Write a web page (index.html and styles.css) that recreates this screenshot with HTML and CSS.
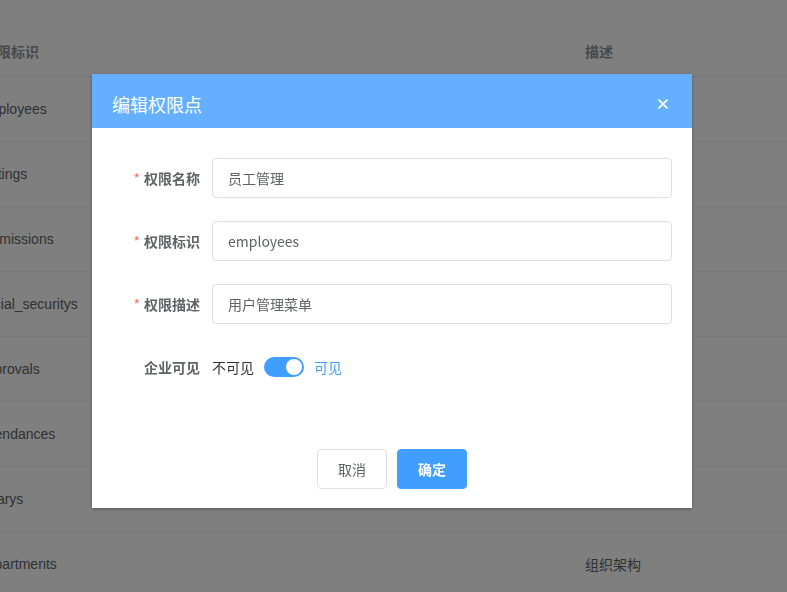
FILE: index.html
```html
<!DOCTYPE html>
<html lang="zh">
<head>
<meta charset="utf-8">
<link rel="stylesheet" href="styles.css">
</head>
<body>
<div class="table">
  <div class="row head"><div class="c1">权限标识</div><div class="c2">描述</div></div>
  <div class="row"><div class="c1">employees</div><div class="c2"></div></div>
  <div class="row"><div class="c1">settings</div><div class="c2"></div></div>
  <div class="row"><div class="c1">permissions</div><div class="c2"></div></div>
  <div class="row"><div class="c1">social_securitys</div><div class="c2"></div></div>
  <div class="row"><div class="c1">approvals</div><div class="c2"></div></div>
  <div class="row"><div class="c1">attendances</div><div class="c2"></div></div>
  <div class="row"><div class="c1">salarys</div><div class="c2"></div></div>
  <div class="row"><div class="c1">departments</div><div class="c2">组织架构</div></div>
</div>
<div class="mask"></div>
<div class="dialog">
  <div class="dlg-head">
    <span class="dlg-title">编辑权限点</span>
    <svg class="close" width="10" height="10" viewBox="0 0 10 10"><path d="M0.5 0.5L9.5 9.5M9.5 0.5L0.5 9.5" stroke="#fff" stroke-width="1.6" fill="none"/></svg>
  </div>
  <div class="dlg-body">
    <div class="item">
      <label class="lbl"><span class="req">*</span>权限名称</label>
      <div class="input">员工管理</div>
    </div>
    <div class="item">
      <label class="lbl"><span class="req">*</span>权限标识</label>
      <div class="input">employees</div>
    </div>
    <div class="item">
      <label class="lbl"><span class="req">*</span>权限描述</label>
      <div class="input">用户管理菜单</div>
    </div>
    <div class="item">
      <label class="lbl">企业可见</label>
      <div class="switch-wrap">
        <span class="off">不可见</span>
        <span class="switch"><span class="knob"></span></span>
        <span class="on">可见</span>
      </div>
    </div>
  </div>
  <div class="dlg-foot">
    <button class="btn">取消</button>
    <button class="btn primary">确定</button>
  </div>
</div>
</body>
</html>
```
FILE: styles.css
```css
html, body {
  margin: 0;
  padding: 0;
  background: #fff;
  font-family: "Liberation Sans", "Noto Sans CJK SC", sans-serif;
  font-size: 14px;
  color: #606266;
  overflow: hidden;
  height: 592px;
}
.table {
  margin-left: -21px;
  width: 824px;
}
.row {
  display: flex;
  align-items: center;
  height: 64px;
  border-bottom: 1px solid #ebeef5;
}
.row.head {
  height: 76px;
  align-items: flex-end;
  font-weight: bold;
  color: #909399;
}
.row.head > div {
  padding-bottom: 14px;
  line-height: 20px;
}
.row.head > .c1 { padding-left: 4px; width: 602px; }
.c1 { width: 606px; }
.c2 { flex: 1; }
.mask {
  position: fixed;
  inset: 0;
  background: rgba(0, 0, 0, 0.5);
}
.dialog {
  position: absolute;
  left: 92px;
  top: 74px;
  width: 600px;
  background: #fff;
  box-shadow: 0 1px 3px rgba(0, 0, 0, 0.3);
  font-family: "Noto Sans CJK SC", "Liberation Sans", sans-serif;
}
.dlg-head {
  background: #64b0ff;
  height: 54px;
  box-sizing: border-box;
  padding: 6px 24px 0 20px;
  display: flex;
  align-items: center;
  justify-content: space-between;
}
.dlg-title {
  color: #fff;
  font-size: 18px;
  line-height: 24px;
}
.close { display: block; }
.dlg-body {
  padding: 30px 20px 29px 20px;
}
.item {
  display: flex;
  align-items: center;
  height: 40px;
  margin-bottom: 23px;
}
.lbl {
  width: 100px;
  padding-right: 12px;
  box-sizing: border-box;
  text-align: right;
  font-weight: bold;
  color: #606266;
  font-size: 14px;
  flex: none;
}
.req {
  color: #f56c6c;
  margin-right: 4px;
  font-weight: normal;
}
.input {
  flex: 1;
  height: 40px;
  box-sizing: border-box;
  border: 1px solid #dcdfe6;
  border-radius: 4px;
  padding: 0 15px;
  display: flex;
  align-items: center;
  color: #606266;
}
.switch-wrap {
  display: flex;
  align-items: center;
}
.off { color: #303133; margin-right: 10px; }
.on { color: #409eff; margin-left: 10px; }
.switch {
  width: 40px;
  height: 20px;
  border-radius: 10px;
  background: #409eff;
  position: relative;
  display: inline-block;
}
.knob {
  position: absolute;
  right: 2px;
  top: 2px;
  width: 16px;
  height: 16px;
  border-radius: 50%;
  background: #fff;
}
.dlg-foot {
  display: flex;
  justify-content: center;
  gap: 10px;
  padding: 10px 20px 19px;
}
.btn {
  width: 70px;
  height: 40px;
  border: 1px solid #dcdfe6;
  border-radius: 4px;
  background: #fff;
  color: #606266;
  font-family: "Noto Sans CJK SC", "Liberation Sans", sans-serif;
  font-size: 14px;
  padding: 0;
}
.btn.primary {
  background: #409eff;
  border-color: #409eff;
  color: #fff;
  font-weight: bold;
}
```
